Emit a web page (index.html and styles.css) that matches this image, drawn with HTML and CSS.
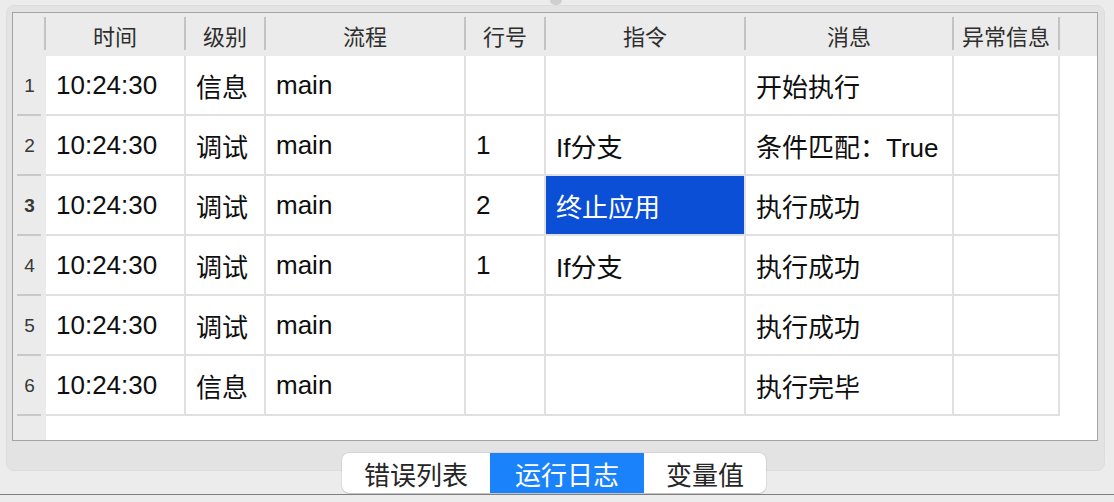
FILE: index.html
```html
<!DOCTYPE html>
<html lang="zh">
<head>
<meta charset="utf-8">
<title>运行日志</title>
<link rel="stylesheet" href="styles.css">
</head>
<body>
<div class="grip-row"><div class="grip"></div></div>
<div class="panel">
  <div class="table-wrap">
    <div class="grid">
      <div class="hcell corner"></div>
      <div class="hcell">时间</div>
      <div class="hcell">级别</div>
      <div class="hcell">流程</div>
      <div class="hcell">行号</div>
      <div class="hcell">指令</div>
      <div class="hcell">消息</div>
      <div class="hcell">异常信息</div>
      <div class="hcell filler"></div>

      <div class="rnum">1</div>
      <div class="cell">10:24:30</div><div class="cell">信息</div><div class="cell">main</div><div class="cell"></div><div class="cell"></div><div class="cell">开始执行</div><div class="cell"></div><div class="blank"></div>

      <div class="rnum">2</div>
      <div class="cell">10:24:30</div><div class="cell">调试</div><div class="cell">main</div><div class="cell">1</div><div class="cell">If分支</div><div class="cell">条件匹配：True</div><div class="cell"></div><div class="blank"></div>

      <div class="rnum current">3</div>
      <div class="cell">10:24:30</div><div class="cell">调试</div><div class="cell">main</div><div class="cell">2</div><div class="cell selected">终止应用</div><div class="cell">执行成功</div><div class="cell"></div><div class="blank"></div>

      <div class="rnum">4</div>
      <div class="cell">10:24:30</div><div class="cell">调试</div><div class="cell">main</div><div class="cell">1</div><div class="cell">If分支</div><div class="cell">执行成功</div><div class="cell"></div><div class="blank"></div>

      <div class="rnum">5</div>
      <div class="cell">10:24:30</div><div class="cell">调试</div><div class="cell">main</div><div class="cell"></div><div class="cell"></div><div class="cell">执行成功</div><div class="cell"></div><div class="blank"></div>

      <div class="rnum">6</div>
      <div class="cell">10:24:30</div><div class="cell">信息</div><div class="cell">main</div><div class="cell"></div><div class="cell"></div><div class="cell">执行完毕</div><div class="cell"></div><div class="blank"></div>

      <div class="rfill"></div>
      <div class="dfill"></div>
    </div>
  </div>
</div>
<div class="footer">
  <div class="segmented">
    <div class="seg seg-errors">错误列表</div>
    <div class="seg seg-log active">运行日志</div>
    <div class="seg seg-vars">变量值</div>
  </div>
</div>
<div class="statusbar"></div>
</body>
</html>
```
FILE: styles.css
```css
html, body {
  margin: 0;
  padding: 0;
}
body {
  width: 1114px;
  height: 502px;
  overflow: hidden;
  background: #ececec;
  font-family: "Liberation Sans", "Noto Sans CJK SC", sans-serif;
  display: flex;
  flex-direction: column;
}
.grip-row {
  height: 5px;
  display: flex;
  justify-content: center;
  padding-right: 2px;
}
.grip {
  width: 12px;
  height: 5px;
  background: #cfcfcf;
  border-radius: 0 0 6px 6px;
}
.panel {
  margin: 0 9px 0 6px;
  height: 466px;
  box-sizing: border-box;
  background: #e3e3e3;
  border: 1px solid #dddddd;
  border-radius: 8px;
  padding: 6px 6px 0 5px;
}
.table-wrap {
  height: 429px;
  box-sizing: border-box;
  border: 1px solid #a4a4a4;
  background: #ffffff;
}
.grid {
  height: 100%;
  display: grid;
  grid-template-columns: 33px 140px 80px 200px 80px 200px 208px 106px 1fr;
  grid-template-rows: 43px repeat(6, 60px) 1fr;
}
.hcell {
  background: #ebebeb linear-gradient(#c3c3c3, #c3c3c3) no-repeat right 0 top 4px / 2px 33px;
  color: #2e2e2e;
  font-size: 22px;
  display: flex;
  align-items: center;
  justify-content: center;
  padding-right: 2px;
}
.hcell.filler {
  background: #ebebeb;
}
.rnum {
  background: #ebebeb linear-gradient(#c8c8c8, #c8c8c8) no-repeat left 4px bottom 0 / 24px 2px;
  color: #383838;
  font-size: 19px;
  display: flex;
  align-items: center;
  justify-content: center;
  padding-bottom: 1px;
}
.rnum.current {
  font-weight: bold;
}
.cell {
  box-sizing: border-box;
  border-right: 2px solid #e0e0e0;
  border-bottom: 2px solid #e0e0e0;
  font-size: 26px;
  color: #0f0f0f;
  display: flex;
  align-items: center;
  padding-left: 10px;
  white-space: nowrap;
  overflow: hidden;
}
.cell.selected {
  background: #0b4fd7;
  color: #ffffff;
}
.blank {
  background: #ffffff;
}
.rfill {
  background: #ebebeb;
}
.dfill {
  grid-column: 2 / -1;
  background: #ffffff;
}
.footer {
  margin-top: -18px;
  height: 41px;
  display: flex;
  justify-content: center;
  padding-right: 6px;
}
.segmented {
  height: 40px;
  display: flex;
  background: #ffffff;
  border-radius: 7px;
  overflow: hidden;
  box-shadow: 0 0 0 0.5px rgba(0, 0, 0, 0.12), 0 1px 1px rgba(0, 0, 0, 0.12);
}
.seg {
  display: flex;
  align-items: center;
  justify-content: center;
  font-size: 26px;
  color: #262626;
}
.seg-errors { width: 148px; }
.seg-log { width: 154px; }
.seg-vars { width: 122px; }
.seg.active {
  background: #1a82fb;
  color: #ffffff;
}
.statusbar {
  flex: 1;
  border-top: 1px solid #7f7f7f;
  background: #ececec;
}
```
